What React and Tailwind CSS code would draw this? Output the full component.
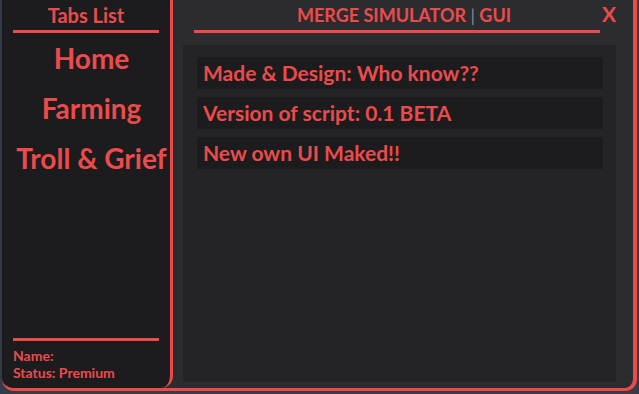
import React from 'react';

const RED = 'text-[#ec4b4b]';

const infoLines = [
  'Made & Design: Who know??',
  'Version of script: 0.1 BETA',
  'New own UI Maked!!',
];

const tabs = ['Home', 'Farming', 'Troll & Grief'];

function App() {
  return (
    <div
      className="w-[639px] h-[394px] overflow-hidden bg-[#353b48]"
      style={{ fontFamily: 'Lato, "Noto Sans", sans-serif' }}
    >
      {/* window */}
      <div className="ml-[2px] -mt-[10px] w-[635px] h-[401px] flex bg-[#2c2b2f] border-r-[4px] border-b-[3px] border-[#ec4b4b] rounded-[12px] shadow-[3px_4px_0_#3a3c43] overflow-hidden">
        {/* sidebar */}
        <div className="w-[171px] h-full shrink-0 flex flex-col bg-[#1c1b1e] border-r-[3px] border-[#ec4b4b] rounded-[12px] pt-[10px] px-[11px] pb-[5px]">
          <div className={`${RED} text-[20px] font-bold text-center leading-[28px] mt-[1px]`}>Tabs List</div>
          <div className="h-[3px] bg-[#ec4b4b] mt-[1px]" />
          <div className="flex flex-col items-center mt-[9px] gap-[17px] pl-[7px] -mr-[4px]">
            {tabs.map((t) => (
              <div key={t} className={`${RED} text-[28px] font-bold leading-[33px] whitespace-nowrap`}>
                {t}
              </div>
            ))}
          </div>
          <div className="flex-1" />
          <div className="h-[3px] bg-[#ec4b4b]" />
          <div className={`${RED} text-[14px] font-bold leading-[17px] mt-[6px]`}>Name:</div>
          <div className={`${RED} text-[14px] font-bold leading-[17px]`}>Status: Premium</div>
          <div className="h-[2px]" />
        </div>

        {/* main */}
        <div className="flex-1 flex flex-col pt-[10px] pb-[6px]">
          <div className="flex items-start pl-[21px]">
            <div className="w-[406px]">
              <div className={`${RED} text-[18px] font-bold text-center leading-[28px] pl-[14px] mt-[1px]`}>
                MERGE SIMULATOR <span className="text-[#8a8a90] font-normal">|</span> GUI
              </div>
              <div className="h-[3px] bg-[#ec4b4b] mt-[1px]" />
            </div>
            <div className={`${RED} text-[21px] font-bold leading-[28px] ml-[2px]`}>X</div>
          </div>

          <div className="ml-[10px] mt-[12px] w-[433px] flex-1 bg-[#242326] pt-[12px] pl-[14px] flex flex-col gap-[8px]">
            {infoLines.map((line) => (
              <div key={line} className="w-[406px] h-[32px] bg-[#1c1b1e] flex items-center pl-[6px]">
                <span className={`${RED} text-[21px] font-bold whitespace-nowrap`}>{line}</span>
              </div>
            ))}
          </div>
        </div>
      </div>
    </div>
  );
}

export default App;
